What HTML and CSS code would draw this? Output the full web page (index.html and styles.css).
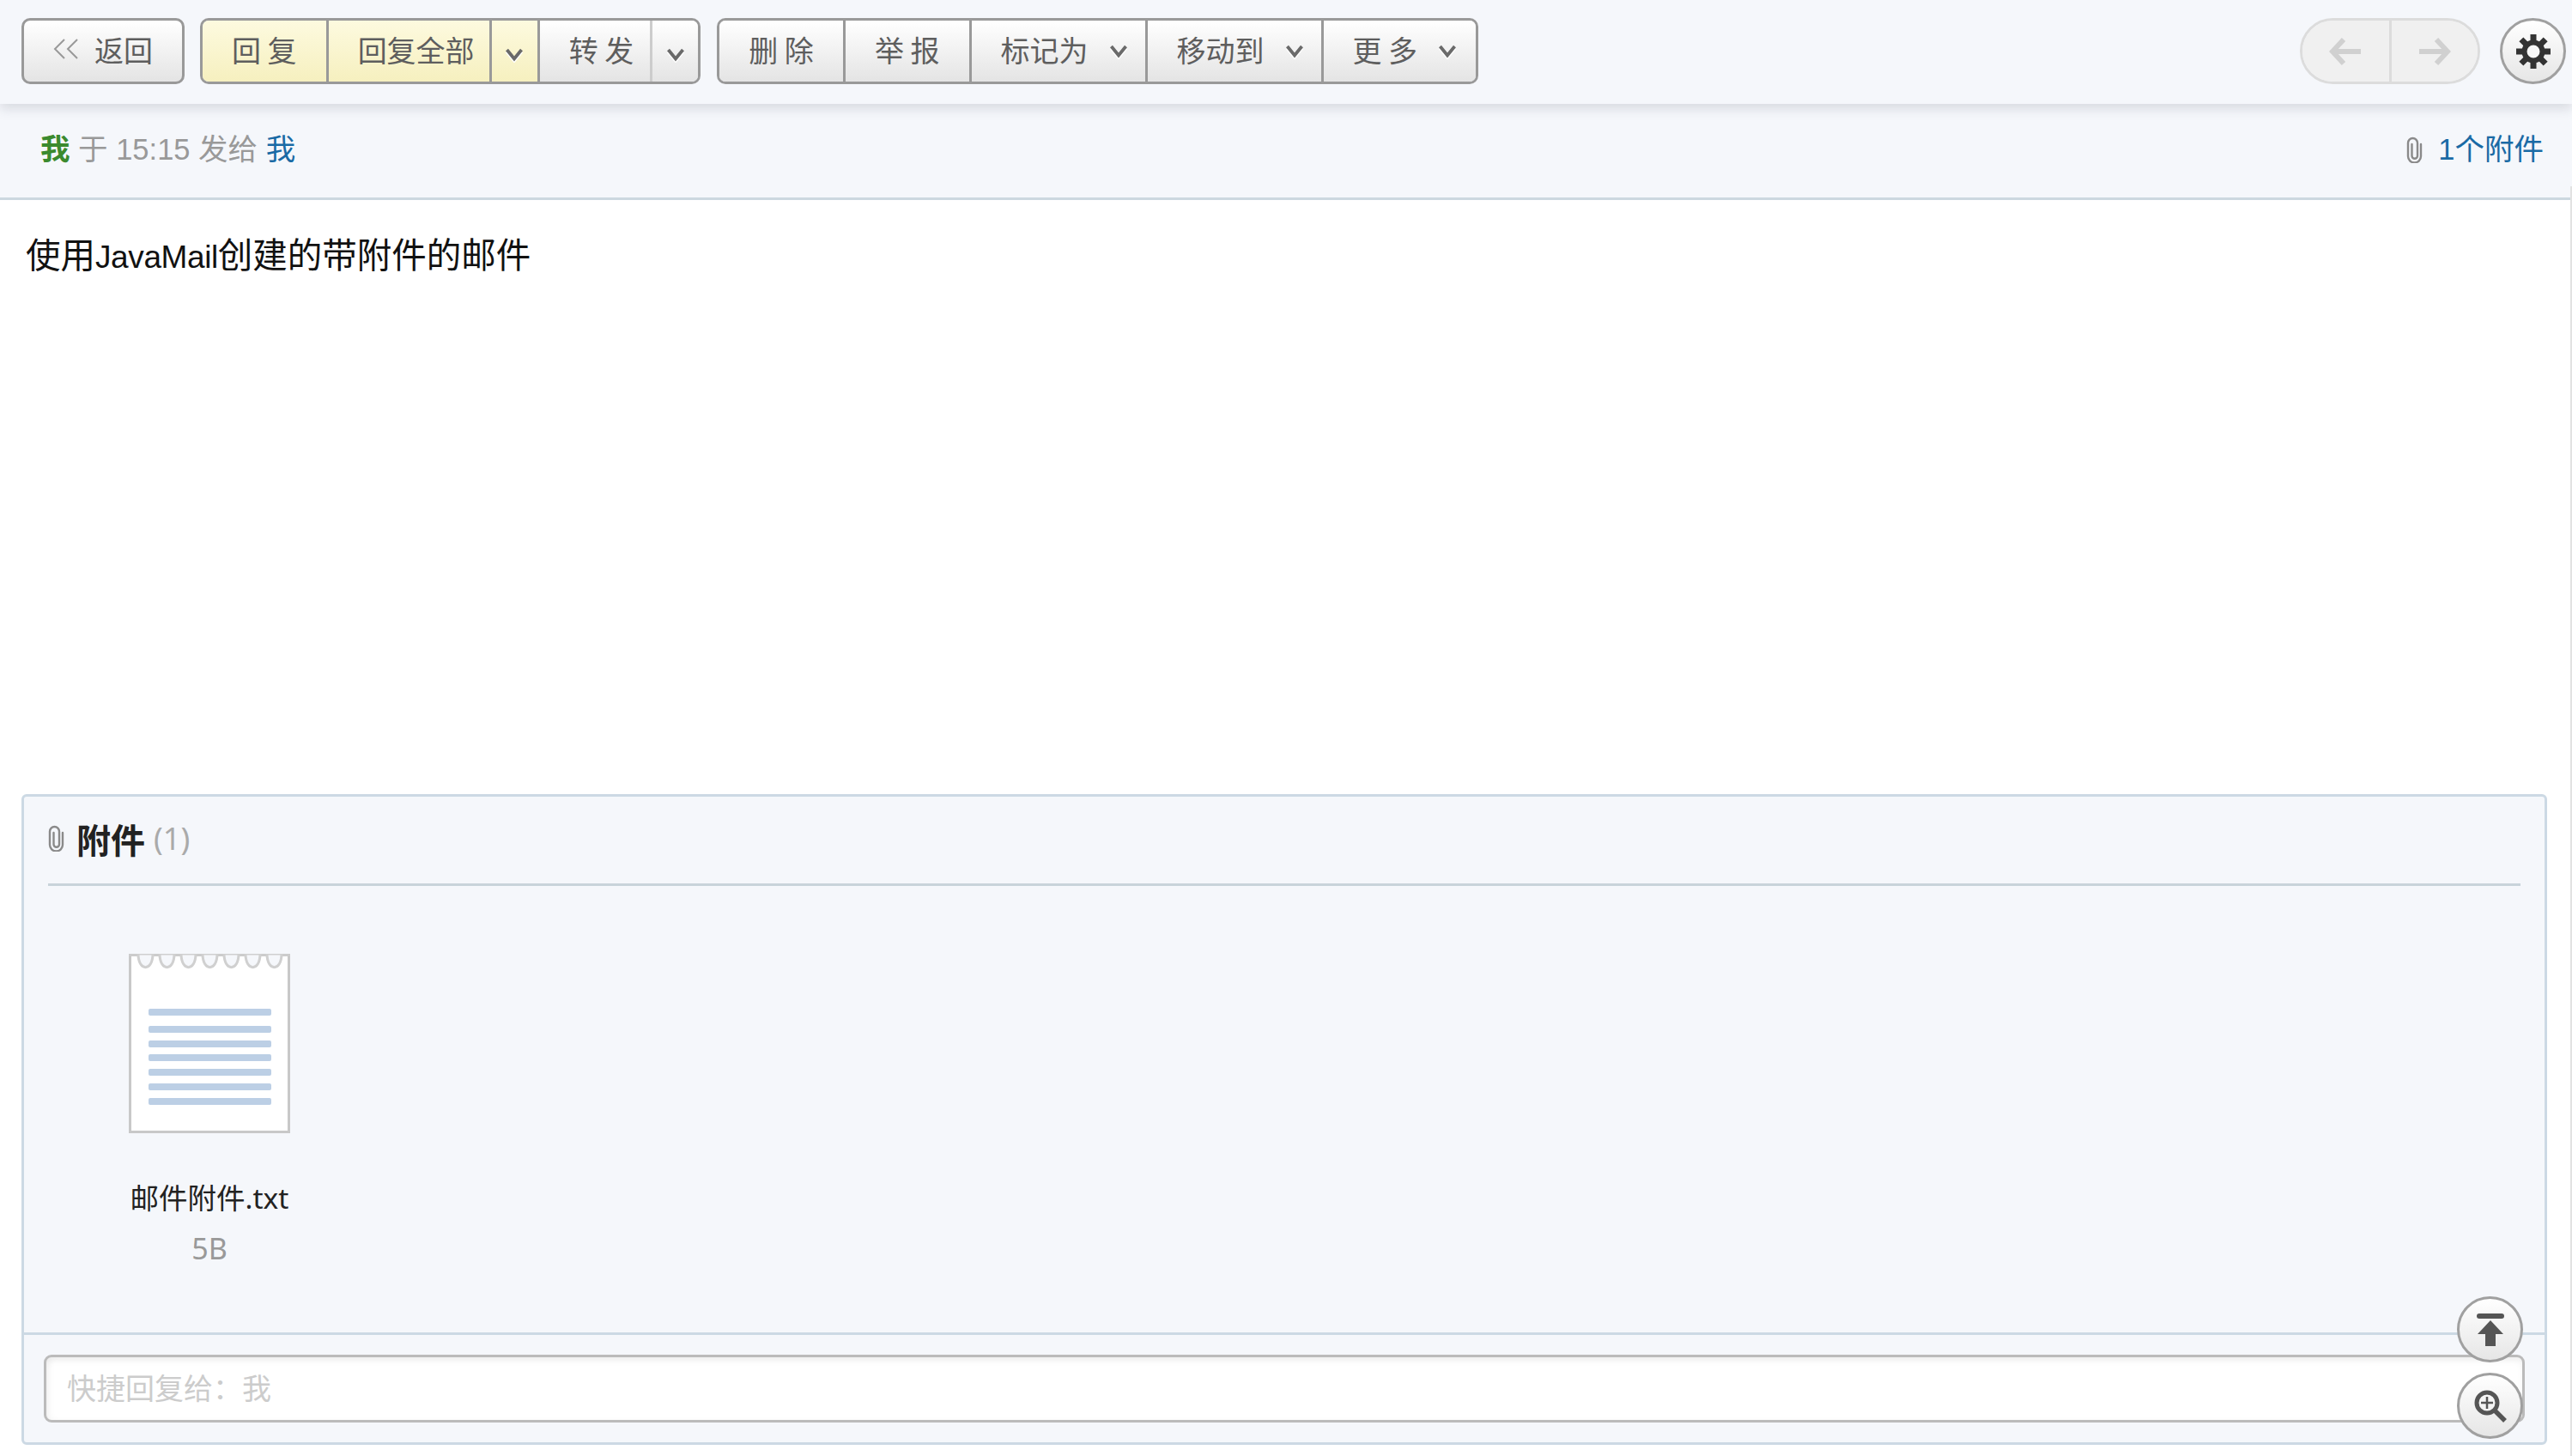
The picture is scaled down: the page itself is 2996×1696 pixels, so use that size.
FILE: index.html
```html
<!DOCTYPE html>
<html lang="zh-CN">
<head>
<meta charset="utf-8">
<title>邮件</title>
<link rel="stylesheet" href="styles.css">
</head>
<body>
<svg class="defs" width="0" height="0" aria-hidden="true">
  <symbol id="chev" viewBox="0 0 22 18"><path d="M2.500 3 11 13.500 19.500 3" fill="none" stroke="#fff" stroke-width="4" transform="translate(0 2)"/><path d="M2.500 3 11 13.500 19.500 3" fill="none" stroke="#6a6a6a" stroke-width="3.800"/></symbol>
  <symbol id="clip" viewBox="0 0 19 31"><path d="M6.500 9V22.500a3.250 3.250 0 0 0 6.500 0V7.500a5.500 5.500 0 0 0-11 0V23a7.500 7.500 0 0 0 15 0V9" fill="none" stroke="#8a8a8a" stroke-width="2.400" stroke-linecap="round"/></symbol>
</svg>
<div class="page">
  <header class="toolbar">
    <button class="btn back"><svg class="dbl" viewBox="0 0 30 24"><path d="M13 1 2 12 13 23M28 1 17 12 28 23" fill="none" stroke="#999" stroke-width="2"/></svg><span>返回</span></button>
    <div class="group first">
      <button class="btn warm">回 复</button>
      <button class="btn warm tight">回复全部</button>
      <button class="btn warm arrow"><svg class="chev"><use href="#chev"/></svg></button>
      <button class="btn forward">转 发</button>
      <button class="btn arrow light"><svg class="chev"><use href="#chev"/></svg></button>
    </div>
    <div class="group">
      <button class="btn">删 除</button>
      <button class="btn">举 报</button>
      <button class="btn menu">标记为<svg class="chev up"><use href="#chev"/></svg></button>
      <button class="btn menu">移动到<svg class="chev up"><use href="#chev"/></svg></button>
      <button class="btn menu">更 多<svg class="chev up"><use href="#chev"/></svg></button>
    </div>
    <div class="spacer"></div>
    <div class="pager">
      <button class="page-btn"><svg viewBox="0 0 38 34"><path d="M17 3 4 17 17 31M4 17H37" fill="none" stroke="#d0d0d0" stroke-width="6"/></svg></button>
      <button class="page-btn"><svg viewBox="0 0 38 34"><path d="M21 3 34 17 21 31M34 17H1" fill="none" stroke="#d0d0d0" stroke-width="6"/></svg></button>
    </div>
    <button class="round gear"><svg viewBox="0 0 40 40"><g fill="#333"><rect x="16.500" y="0" width="7" height="40"/><rect x="16.500" y="0" width="7" height="40" transform="rotate(45 20 20)"/><rect x="16.500" y="0" width="7" height="40" transform="rotate(90 20 20)"/><rect x="16.500" y="0" width="7" height="40" transform="rotate(135 20 20)"/></g><circle cx="20" cy="20" r="10.500" fill="#f7f7f7" stroke="#333" stroke-width="6"/></svg></button>
  </header>
  <div class="meta">
    <div class="meta-info"><b class="sender">我</b> 于 15:15 发给 <a class="link">我</a></div>
    <div class="meta-attach"><svg class="clip"><use href="#clip"/></svg><a class="link">1个附件</a></div>
  </div>
  <main class="content">使用<span class="latin">JavaMail</span>创建的带附件的邮件</main>
  <section class="panel">
    <div class="attach-area">
      <h2 class="attach-title"><svg class="clip"><use href="#clip"/></svg><strong>附件</strong><span class="count">(1)</span></h2>
      <div class="file">
        <svg class="note" viewBox="0 0 188 209">
          <rect x="1.500" y="1.500" width="185" height="206" fill="#fff"/>
          <path d="M1.500 1.500V207.500H186.500V1.500" fill="none" stroke="#c8c8c8" stroke-width="3"/>
          <path d="M0 1.500H188" fill="none" stroke="#cccccc" stroke-width="3"/>
          <g fill="#f5f7fb" stroke="#d0d0d0" stroke-width="3">
            <path d="M11 0c0 21 17 21 17 0Z"/><path d="M36 0c0 21 17 21 17 0Z"/><path d="M61 0c0 21 17 21 17 0Z"/><path d="M86 0c0 21 17 21 17 0Z"/><path d="M111 0c0 21 17 21 17 0Z"/><path d="M136 0c0 21 17 21 17 0Z"/><path d="M161 0c0 21 17 21 17 0Z"/>
          </g>
          <g fill="#bccfe5"><rect x="23" y="64" width="143" height="8" rx="2"/><rect x="23" y="84" width="143" height="8" rx="2"/><rect x="23" y="101" width="143" height="8" rx="2"/><rect x="23" y="117" width="143" height="8" rx="2"/><rect x="23" y="134" width="143" height="8" rx="2"/><rect x="23" y="151" width="143" height="8" rx="2"/><rect x="23" y="168" width="143" height="8" rx="2"/></g>
        </svg>
        <div class="file-name">邮件附件.txt</div>
        <div class="file-size">5B</div>
      </div>
    </div>
    <div class="quick">
      <div class="quick-input">快捷回复给：我</div>
    </div>
    <button class="round float top"><svg viewBox="0 0 32 38"><path d="M3 3H29" stroke="#555" stroke-width="6" stroke-linecap="round"/><path d="M16 8 31 24H22V38H10V24H1Z" fill="#555"/></svg></button>
    <button class="round float zoom"><svg viewBox="0 0 38 38"><circle cx="15" cy="15" r="12" fill="none" stroke="#555" stroke-width="5"/><path d="M24 24 36 36" stroke="#555" stroke-width="5.500"/><path d="M8 15H22M15 8V22" stroke="#555" stroke-width="2.500"/></svg></button>
  </section>
</div>
</body>
</html>
```
FILE: styles.css
```css
* { box-sizing: border-box; }
html, body { margin: 0; padding: 0; background: #fff; }
body { font-family: "Liberation Sans", "Noto Sans CJK SC", sans-serif; color: #222; overflow: hidden; }
.defs { position: absolute; }
button { font: inherit; margin: 0; }
.page { position: relative; width: 2996px; height: 1696px; display: flex; flex-direction: column; align-items: stretch; }
.page::after { content: ""; position: absolute; top: 217px; right: 0; bottom: 0; width: 2px; background: #e2e2e2; z-index: 3; }

.toolbar { height: 121px; padding: 21px 7px 23px 25px; background: #f5f7fb; display: flex; align-items: stretch; gap: 18px; box-shadow: 0 6px 12px rgba(120,125,135,.22); position: relative; z-index: 2; }
.spacer { flex: 1; margin-right: -18px; }
.group { display: flex; border: 3px solid #999; border-radius: 10px; overflow: hidden; }
.group.first { margin-right: 1px; }
.btn { display: flex; align-items: center; justify-content: center; height: 100%; padding: 0 34px 5px; border: 0; border-left: 3px solid #999; background: linear-gradient(#fff, #e4e4e4); font-family: "Noto Sans CJK SC", sans-serif; font-size: 34px; font-weight: 400; color: #5e5e5e; white-space: nowrap; }
.group .btn:first-child { border-left: 0; }
.back { padding: 0 0 5px; border: 3px solid #999; border-radius: 10px; gap: 18px; width: 190px; }
.dbl { width: 30px; height: 24px; }
.warm { background: linear-gradient(#fdfadf, #f6f0bf); }
.tight { padding: 0 17px 5px 34px; }
.forward { padding: 0 19px 5px 34px; }
.arrow { width: 56px; padding: 0; }
.arrow.light { border-left-color: #ccc; }
.chev { width: 22px; height: 18px; margin-top: 9px; }
.chev.up { margin: 5px 0 0 24px; }
.menu { padding-right: 20px; }
.menu:last-child { padding-right: 22px; }

.pager { display: flex; width: 210px; border: 3px solid #dcdcdc; border-radius: 39px; overflow: hidden; margin-right: 5px; }
.page-btn { flex: 1; border: 0; background: #f0f0f0; padding: 0; display: flex; align-items: center; justify-content: center; }
.page-btn + .page-btn { border-left: 3px solid #dcdcdc; }
.page-btn svg { width: 38px; height: 34px; }
.round { width: 77px; height: 77px; border: 3px solid #a0a0a0; border-radius: 50%; background: linear-gradient(#fff, #e6e6e6); padding: 0; display: flex; align-items: center; justify-content: center; }
.gear svg { width: 40px; height: 40px; }

.meta { height: 112px; padding: 24px 33px 0 47px; background: #f5f7fb; border-bottom: 3px solid #ccd8e0; display: flex; justify-content: space-between; align-items: flex-start; font-family: "Liberation Sans", "Noto Sans CJK SC", sans-serif; font-size: 34.500px; font-weight: 400; line-height: 58px; color: #999; }
.sender { color: #3b8a2e; font-weight: 700; }
.link { color: #1a6aa5; }
.meta-attach { display: flex; align-items: center; gap: 18px; }
.clip { width: 19px; height: 31px; }

.content { height: 692px; padding: 30px 30px 0; background: #fff; font-family: "Noto Sans CJK SC", sans-serif; font-size: 40.500px; font-weight: 400; line-height: 64px; color: #111; }
.latin { font-family: "Liberation Sans", sans-serif; font-size: 37px; letter-spacing: -0.400px; }

.panel { position: relative; width: 2942px; height: 758px; margin-left: 25px; background: #f5f7fb; border: 3px solid #ccd9e4; border-radius: 6px; display: flex; flex-direction: column; }
.attach-area { flex: 1; padding: 0 28px; border-bottom: 3px solid #ccd9e4; }
.attach-title { margin: 0; height: 104px; display: flex; align-items: center; border-bottom: 3px solid #c8d3da; font-weight: 400; padding: 0 0 4px 0; }
.attach-title strong { margin-left: 14px; font-family: "Noto Sans CJK SC", sans-serif; font-size: 40px; font-weight: 700; color: #222; }
.count { margin-left: 10px; font-family: "Noto Sans", sans-serif; font-size: 36px; color: #aaa; }
.file { width: 188px; margin: 79px 0 0 94px; display: flex; flex-direction: column; align-items: center; }
.note { width: 188px; height: 209px; display: block; }
.file-name { margin-top: 50px; font-family: "Noto Sans", "Noto Sans CJK SC", sans-serif; font-size: 33.500px; line-height: 50px; color: #222; white-space: nowrap; }
.file-size { margin-top: 9px; font-family: "Noto Sans", sans-serif; font-size: 34px; line-height: 50px; color: #999; }

.quick { height: 125px; padding: 23px 23px 0; }
.quick-input { height: 79px; border: 3px solid #bbb; border-radius: 9px; background: #fff; box-shadow: inset 0 5px 6px rgba(0,0,0,.05), inset 5px 0 6px rgba(0,0,0,.03); padding: 0 24px 4px; font-family: "Noto Sans CJK SC", sans-serif; font-size: 34px; font-weight: 400; line-height: 70px; color: #ccc; }

.float { position: absolute; right: 25px; }
.top { top: 582px; }
.zoom { top: 671px; }
.top svg { width: 32px; height: 38px; }
.zoom svg { width: 38px; height: 38px; }
```
